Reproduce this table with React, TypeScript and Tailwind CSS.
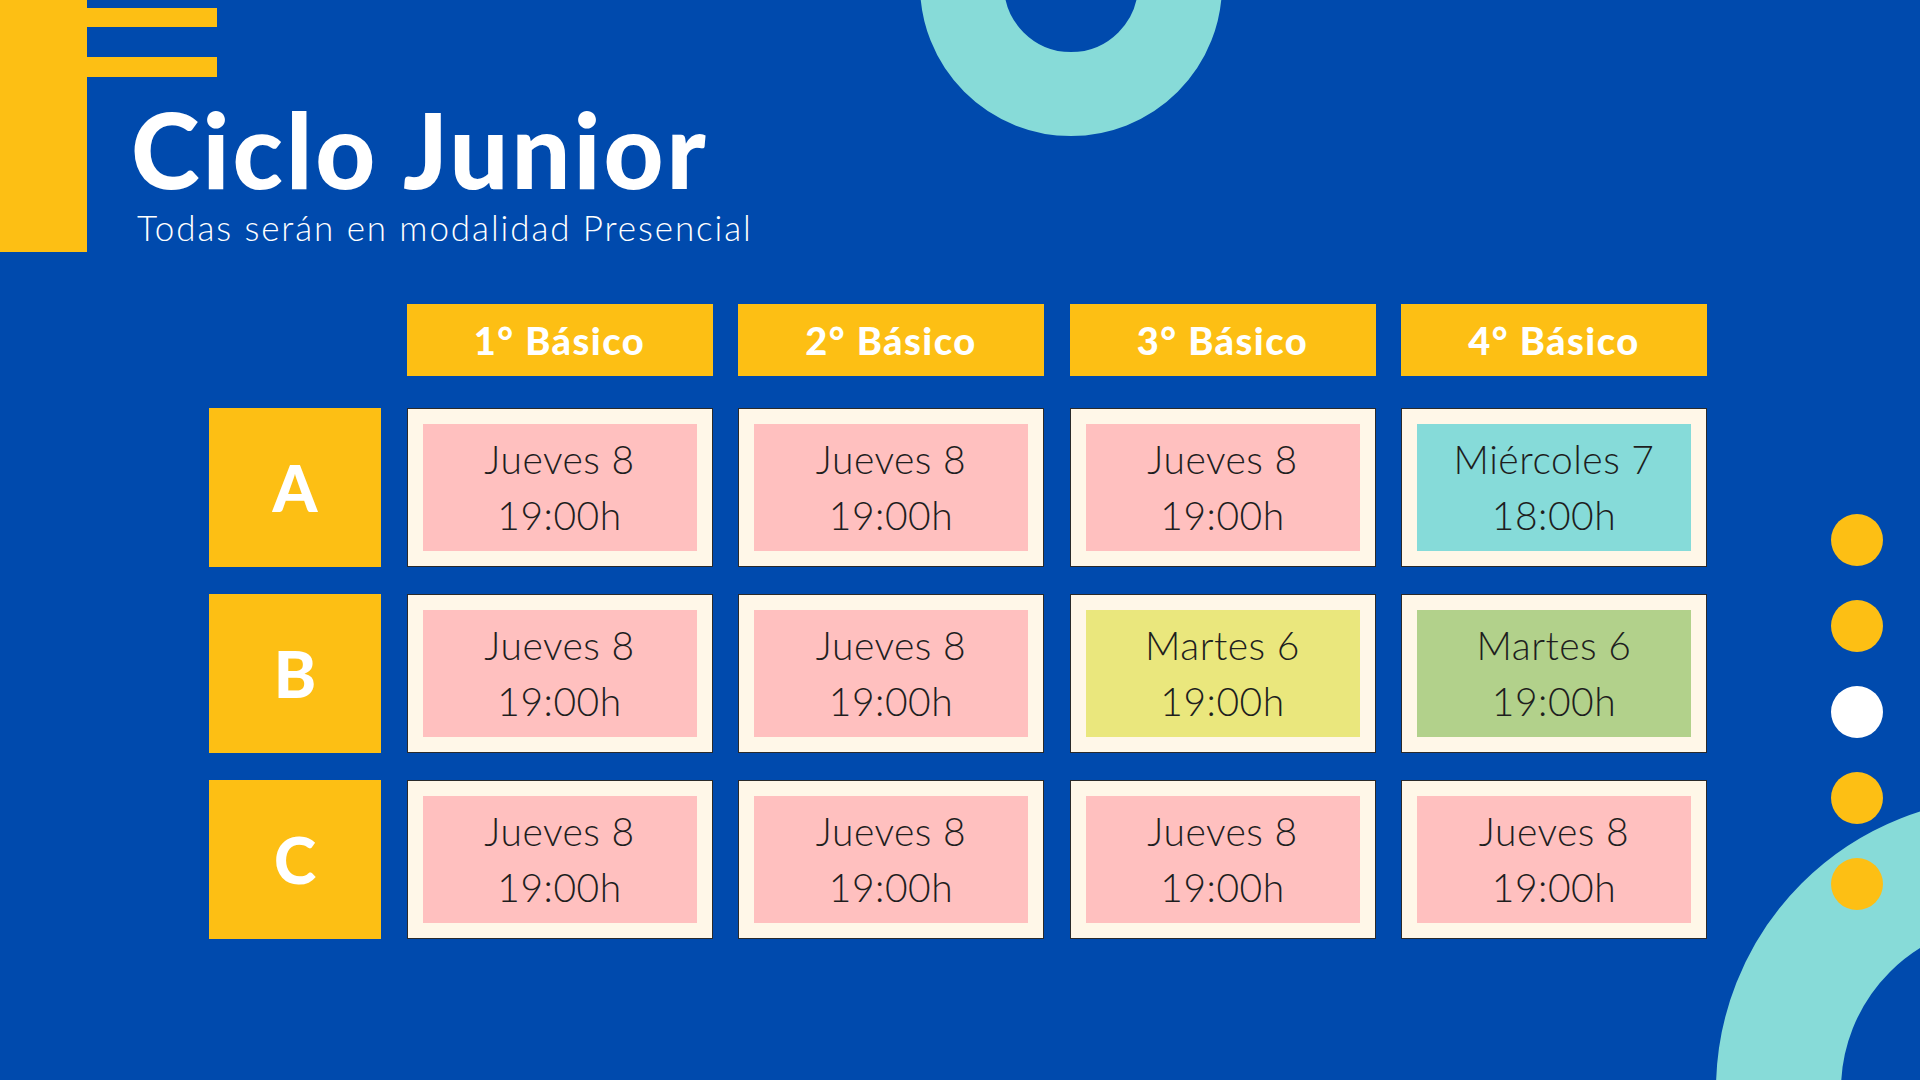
import React from 'react';

type Slot = { day: string; time: string; tone: string };

const HEADERS = ['1° Básico', '2° Básico', '3° Básico', '4° Básico'];

const PINK = 'bg-[#ffc0bf]';
const TEAL = 'bg-[#86dbd9]';
const LIME = 'bg-[#eae77d]';
const SAGE = 'bg-[#b2d18b]';

const jueves: Slot = { day: 'Jueves 8', time: '19:00h', tone: PINK };

const ROWS: { label: string; slots: Slot[] }[] = [
  {
    label: 'A',
    slots: [jueves, jueves, jueves, { day: 'Miércoles 7', time: '18:00h', tone: TEAL }],
  },
  {
    label: 'B',
    slots: [
      jueves,
      jueves,
      { day: 'Martes 6', time: '19:00h', tone: LIME },
      { day: 'Martes 6', time: '19:00h', tone: SAGE },
    ],
  },
  { label: 'C', slots: [jueves, jueves, jueves, jueves] },
];

const DOTS = ['bg-[#fdbf14]', 'bg-[#fdbf14]', 'bg-white', 'bg-[#fdbf14]', 'bg-[#fdbf14]'];

const Cell = ({ slot }: { slot: Slot }) => (
  <div className="h-full border border-[#2a2a2a] bg-[#fff7e8] p-[15px]">
    <div
      className={`${slot.tone} flex h-full flex-col items-center justify-center pb-[2px] text-[39px] leading-[56px] font-light tracking-[0.5px] text-[#1e1e1e]`}
    >
      <span>{slot.day}</span>
      <span>{slot.time}</span>
    </div>
  </div>
);

export default function App() {
  return (
    <div
      className="relative h-[1080px] w-[1920px] overflow-hidden bg-[#004aad]"
      style={{ fontFamily: 'Lato, "Noto Sans", sans-serif' }}
    >
      {/* decorative rings and dots */}
      <div className="absolute left-[920px] top-[-166px] h-[302px] w-[302px] rounded-full border-[84px] border-[#87dbd8]" />
      <div className="absolute left-[1716px] top-[798px] h-[584px] w-[584px] rounded-full border-[125px] border-[#87dbd8]" />
      <div className="absolute left-[1831px] top-[514px] flex flex-col gap-[34px]">
        {DOTS.map((c, i) => (
          <div key={i} className={`${c} h-[52px] w-[52px] rounded-full`} />
        ))}
      </div>

      {/* Title block */}
      <div className="flex h-[252px]">
        <div className="h-full w-[87px] bg-[#fdbf14]" />
        <div className="flex flex-col">
          <div className="mt-[8px] h-[19px] w-[130px] bg-[#fdbf14]" />
          <div className="mt-[30px] h-[20px] w-[130px] bg-[#fdbf14]" />
          <h1 className="ml-[44px] mt-[23px] text-[104px] leading-[0.94] font-black tracking-[3px] text-white">
            Ciclo Junior
          </h1>
          <p className="ml-[50px] mt-[12px] text-[35px] leading-none font-light tracking-[1.9px] text-white">
            Todas serán en modalidad Presencial
          </p>
        </div>
      </div>

      {/* Schedule */}
      <div className="mt-[52px] pl-[209px]">
        <div className="grid grid-cols-[172px_repeat(4,306px)] gap-x-[25.5px]">
          <div />
          {HEADERS.map((h) => (
            <div
              key={h}
              className="flex h-[72px] items-center justify-center bg-[#fdbf14] text-[38px] font-black tracking-[1.5px] text-white"
            >
              {h}
            </div>
          ))}
        </div>
        <div className="mt-[32px] flex flex-col gap-[27px]">
          {ROWS.map((row) => (
            <div
              key={row.label}
              className="grid h-[159px] grid-cols-[172px_repeat(4,306px)] gap-x-[25.5px]"
            >
              <div className="flex items-center justify-center bg-[#fdbf14] text-[64px] font-black text-white">
                {row.label}
              </div>
              {row.slots.map((s, i) => (
                <Cell key={i} slot={s} />
              ))}
            </div>
          ))}
        </div>
      </div>
    </div>
  );
}
